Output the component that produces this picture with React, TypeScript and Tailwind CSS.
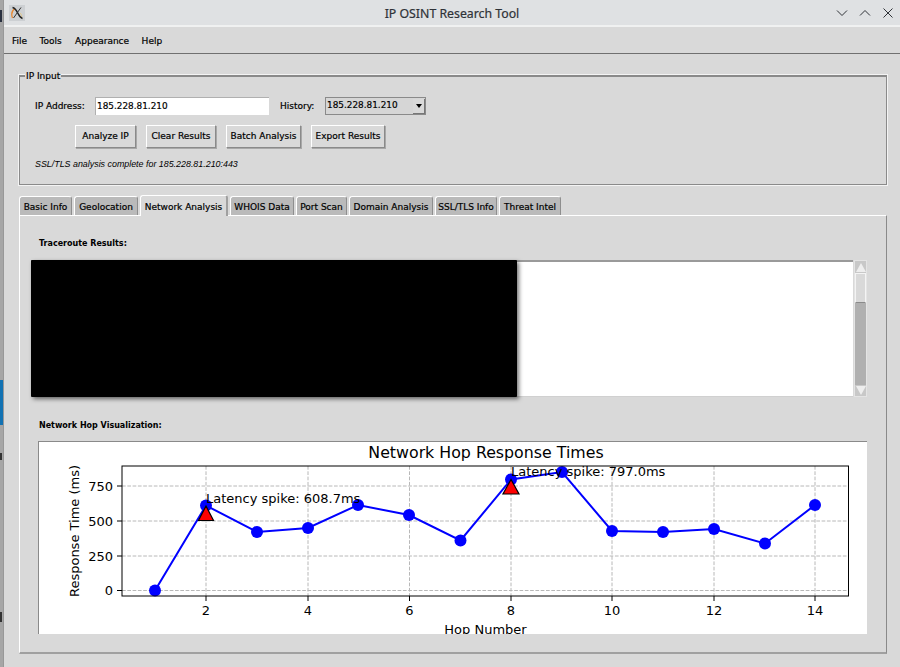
const tabs = [
  { label: 'Basic Info', w: 'w-[53px]' },
  { label: 'Geolocation', w: 'w-[64px]' },
  { label: 'Network Analysis', w: 'w-[88px]', active: true },
  { label: 'WHOIS Data', w: 'w-[64px]' },
  { label: 'Port Scan', w: 'w-[51px]' },
  { label: 'Domain Analysis', w: 'w-[84px]' },
  { label: 'SSL/TLS Info', w: 'w-[62px]' },
  { label: 'Threat Intel', w: 'w-[62px]' },
]

const buttons = [
  { label: 'Analyze IP', w: 'w-[61px]' },
  { label: 'Clear Results', w: 'w-[70px]' },
  { label: 'Batch Analysis', w: 'w-[75px]' },
  { label: 'Export Results', w: 'w-[74px]' },
]

// hop positions read off the plot, in page pixels
const hops = [
  [155, 590.5], [206, 505.5], [257, 532], [308, 528], [358, 505], [409, 515], [460.5, 540.5],
  [511, 479.5], [562, 472], [612, 531], [663, 532], [714, 529], [765, 543.5], [815, 505],
]
const xTicks = [[206, '2'], [308, '4'], [409.5, '6'], [511, '8'], [612, '10'], [714, '12'], [815, '14']] as const
const yTicks = [[486, '750'], [521, '500'], [556, '250'], [590.5, '0']] as const

function HopChart() {
  return (
    <svg viewBox="39 442 828 192" className="block w-[828px] h-[192px]" fontFamily="'DejaVu Sans', sans-serif">
      {xTicks.map(([x, t]) => (
        <g key={t}>
          <line x1={x} x2={x} y1={466} y2={596} stroke="#b8b8b8" strokeWidth="1" strokeDasharray="3.7 1.6" />
          <line x1={x} x2={x} y1={596} y2={601} stroke="#000" strokeWidth="1" />
          <text x={x} y={615} fontSize="13" textAnchor="middle" fill="#000">{t}</text>
        </g>
      ))}
      {yTicks.map(([y, t]) => (
        <g key={t}>
          <line x1={122} x2={848} y1={y} y2={y} stroke="#b8b8b8" strokeWidth="1" strokeDasharray="3.7 1.6" />
          <line x1={117} x2={122} y1={y} y2={y} stroke="#000" strokeWidth="1" />
          <text x={113} y={y + 4.5} fontSize="13" textAnchor="end" fill="#000">{t}</text>
        </g>
      ))}
      <polyline points={hops.map(p => p.join(',')).join(' ')} fill="none" stroke="#0000ff" strokeWidth="2" />
      {hops.map(([x, y]) => (
        <circle key={x} cx={x} cy={y} r="6" fill="#0000ff" />
      ))}
      <polygon points="206,506 198.5,520.5 213.5,520.5" fill="#ff0000" stroke="#000" strokeWidth="1.2" />
      <polygon points="511,479.5 503,494 519,494" fill="#ff0000" stroke="#000" strokeWidth="1.2" />
      <rect x="122" y="466" width="726.5" height="130" fill="none" stroke="#000" strokeWidth="1" />
      <text x="206" y="503" fontSize="13" fill="#000">Latency spike: 608.7ms</text>
      <text x="511" y="476" fontSize="13" fill="#000">Latency spike: 797.0ms</text>
      <text x="486" y="458" fontSize="15.8" textAnchor="middle" fill="#000">Network Hop Response Times</text>
      <text x="485.5" y="634" fontSize="13" textAnchor="middle" fill="#000">Hop Number</text>
      <text transform="translate(79 531) rotate(-90)" fontSize="13" textAnchor="middle" fill="#000">Response Time (ms)</text>
    </svg>
  )
}

function TitleBar() {
  return (
    <div className="h-[27px] shrink-0 flex items-center bg-[#dfe1e3] border-b-2 border-[#f0f1f1]">
      <div className="ml-[5px] w-[16px] h-[16px] bg-[#cdd0d3] flex items-center justify-center">
        <svg width="14" height="14" viewBox="0 0 14 14" fill="none">
          <path d="M5 2.5C2 4.5 1 8 2.5 12" stroke="#e8862e" strokeWidth="1.2" />
          <path d="M10 7c2 1.500 2 3.500 1 5" stroke="#e3c98a" strokeWidth="1" />
          <path d="M2.500 1.500c3 .5 4 3 5.500 6S10.500 12 12.500 12.500" stroke="#222" strokeWidth="1.500" />
          <path d="M11 1.500 3.500 12" stroke="#333" strokeWidth="1" />
        </svg>
      </div>
      <div className="flex-1 text-center text-[#2f3237] text-[12.3px] font-['Noto_Sans',sans-serif] pl-[43px] pt-[4px]">IP OSINT Research Tool</div>
      <div className="flex items-center gap-[11px] mr-[6px]">
        <svg width="12" height="12" viewBox="0 0 12 12" fill="none" stroke="#2f3237" strokeWidth="1">
          <path d="M1 3.500 6 8.500 11 3.500" />
        </svg>
        <svg width="12" height="12" viewBox="0 0 12 12" fill="none" stroke="#2f3237" strokeWidth="1">
          <path d="M1 8.500 6 3.500 11 8.500" />
        </svg>
        <svg width="12" height="12" viewBox="0 0 12 12" fill="none" stroke="#2f3237" strokeWidth="1">
          <path d="M1.500 1.500 10.500 10.500M10.500 1.500 1.500 10.500" />
        </svg>
      </div>
    </div>
  )
}

export default function App() {
  return (
    <div className="w-[900px] h-[667px] overflow-hidden flex bg-[#d9d9d9] text-[9px] text-black font-['DejaVu_Sans',sans-serif]">
      {/* bit of the desktop behind the window */}
      <div className="w-[4px] shrink-0 flex flex-col bg-[#a6a6a6] border-r border-[#989898]">
        <div className="h-[10px]" />
        <div className="h-[12px] w-[2px] bg-[#2a3140]" />
        <div className="h-[358px]" />
        <div className="h-[45px] bg-[#1272b3]" />
        <div className="h-[28px]" />
        <div className="h-[7px] w-[2px] bg-[#333333]" />
        <div className="h-[152px]" />
        <div className="h-[10px] w-[2px] bg-[#333333]" />
      </div>

      <div className="flex-1 flex flex-col min-w-0 [-webkit-text-stroke:0.2px]">
        <TitleBar />
        <div className="h-[27px] shrink-0 flex items-center gap-[12.5px] pl-[8px] pt-[3px] border-b border-[#707070]">
          <span>File</span>
          <span className="w-[23px]">Tools</span>
          <span>Appearance</span>
          <span>Help</span>
        </div>

        <div className="pl-[15px] pr-[13px] pt-[21px]">
          {/* IP Input frame */}
          <div className="relative h-[110px] border border-t-2 border-[#8a8a8a] outline outline-1 outline-[#f4f4f4] pl-[15px]">
            <span className="absolute -top-[6px] left-[5px] px-[1px] bg-[#d9d9d9] leading-[11px]">IP Input</span>
            <div className="flex items-center h-[18px] mt-[20px]">
              <span className="w-[60px] pt-[1px]">IP Address:</span>
              <div className="w-[174px] h-[18px] bg-white border-l border-t border-[#b0b0b0] pl-[1px] flex items-center text-[8.9px]">185.228.81.210</div>
              <span className="ml-[11px] w-[45px] pt-[1px]">History:</span>
              <div className="w-[101px] h-[18px] flex items-center justify-between bg-[#d6d6d6] border border-[#8a8a8a] pl-[1px] text-[8.9px]">
                <span>185.228.81.210</span>
                <div className="w-[12px] h-[15px] bg-[#d9d9d9] border-r border-b border-[#777777] border-l-white flex items-center justify-center">
                  <div className="w-0 h-0 border-x-[3.5px] border-x-transparent border-t-[4px] border-t-black" />
                </div>
              </div>
            </div>
            <div className="flex gap-[10px] ml-[40px] mt-[10px]">
              {buttons.map(b => (
                <div
                  key={b.label}
                  className={`${b.w} h-[23px] pt-[1px] flex items-center justify-center border border-t-white border-l-white border-r-[#8a8a8a] border-b-[#8a8a8a] shadow-[1px_1px_0_#a8a8a8]`}
                >
                  {b.label}
                </div>
              ))}
            </div>
            <div className="mt-[10px] italic text-[8.9px] leading-[12px] font-['Liberation_Sans',sans-serif] [-webkit-text-stroke:0]">
              SSL/TLS analysis complete for 185.228.81.210:443
            </div>
          </div>

          {/* tabs */}
          <div className="flex items-end gap-[2px] h-[20px] mt-[10px]">
            {tabs.map(t => (
              <div
                key={t.label}
                className={
                  t.active
                    ? `${t.w} h-[21px] -mb-[1px] pt-[3px] relative z-10 flex items-center justify-center bg-[#d9d9d9] border-l border-t border-white border-r-2 border-r-[#a0a0a0] rounded-t-[3px]`
                    : `${t.w} h-[19px] pt-[3px] flex items-center justify-center bg-[#bababa] border-l border-t border-white border-r border-r-[#8e8e8e] rounded-t-[3px]`
                }
              >
                {t.label}
              </div>
            ))}
          </div>

          {/* notebook page */}
          <div className="h-[439px] border border-t-white border-l-white border-r-[#8a8a8a] border-b-2 border-b-[#a0a0a0] pl-[11px] pr-[19px]">
            <div className="pl-[8px] pt-[22px] leading-[12px] font-bold text-[8px] [-webkit-text-stroke:0]">Traceroute Results:</div>
            <div className="flex h-[137px] mt-[10px]">
              <div className="relative flex-1 bg-white border-t-2 border-[#9a9a9a] border-b border-b-[#d0d0d0]">
                <div className="absolute -top-[2px] left-0 w-[486px] h-[137px] bg-black rounded-[1px] shadow-[2px_2px_4px_rgba(0,0,0,0.55)]" />
              </div>
              <div className="w-[13px] ml-[1px] flex flex-col bg-[#b0b0b0] border border-[#e4e4e4]">
                <div className="h-[12px] bg-[#c8c8c8] flex items-center justify-center">
                  <div className="w-0 h-0 border-x-[5px] border-x-transparent border-b-[9px] border-b-[#eeeeee]" />
                </div>
                <div className="h-[30px] bg-[#d9d9d9] border border-[#f4f4f4] border-b-[#8a8a8a]" />
                <div className="flex-1" />
                <div className="h-[11px] bg-[#c8c8c8] flex items-center justify-center">
                  <div className="w-0 h-0 border-x-[5px] border-x-transparent border-t-[9px] border-t-[#eeeeee]" />
                </div>
              </div>
            </div>
            <div className="pl-[8px] mt-[23px] leading-[12px] font-bold text-[8px] [-webkit-text-stroke:0]">Network Hop Visualization:</div>
            <div className="ml-[7px] mt-[9px] w-[829px] h-[193px] bg-white border-l border-t border-[#8a8a8a]">
              <HopChart />
            </div>
          </div>
        </div>
      </div>
    </div>
  )
}
